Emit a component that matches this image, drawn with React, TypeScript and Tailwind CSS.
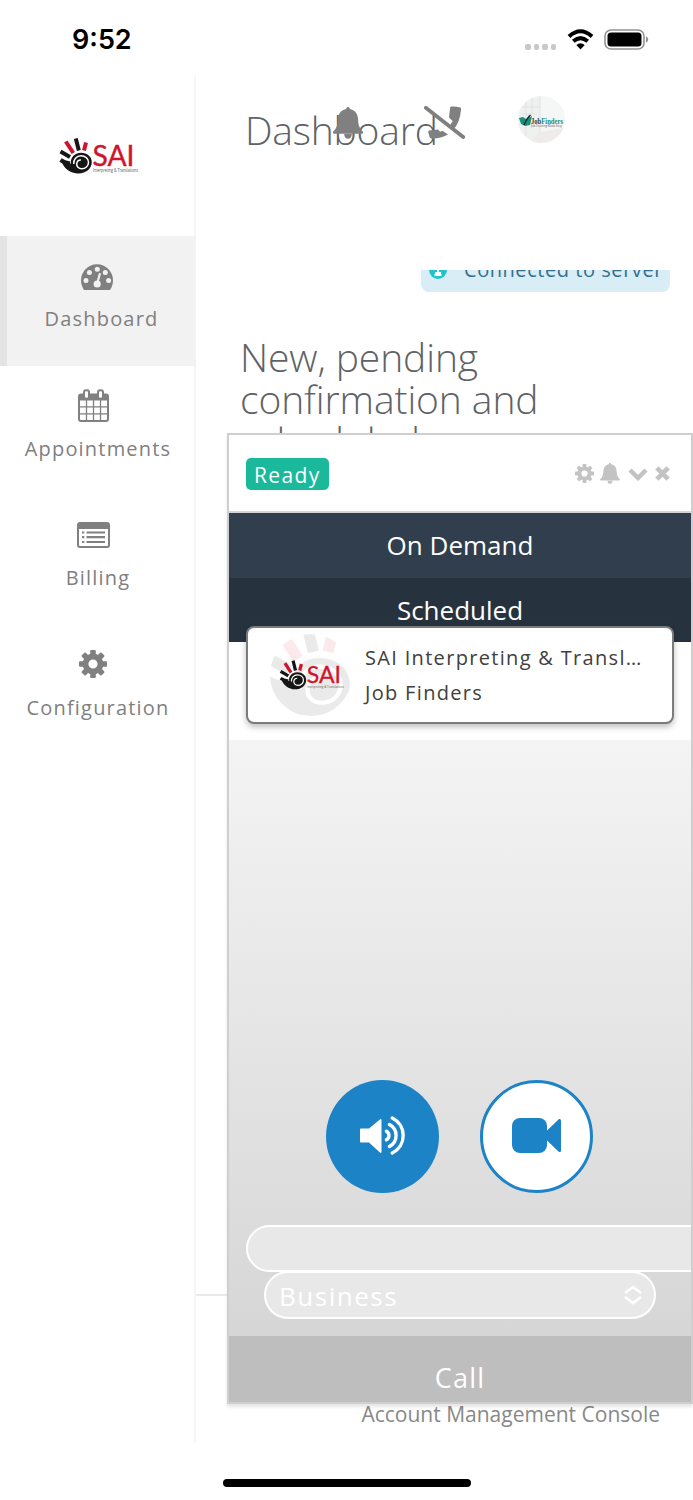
import type { ReactNode } from 'react';

type IconProps = { className?: string };

const BellIcon = ({ className }: IconProps) => (
  <svg viewBox="0 0 30 32" className={className} fill="currentColor">
    <path d="M15 0c1.2 0 1.8.8 1.8 2 5 1 7.7 4.4 8.2 9.500.3 5 .7 9.500 4.600 12.800.8.8.4 2.400-.6 2.400H1c-1 0-1.400-1.600-.6-2.400C4.300 21 4.700 16.500 5 11.500 5.500 6.400 8.200 3 13.200 2c0-1.200.6-2 1.800-2z" />
    <path d="M11.200 27h7.600c0 3-1.600 4.700-3.800 4.700s-3.800-1.700-3.800-4.700z" />
  </svg>
);

const GearIcon = ({ className }: IconProps) => (
  <svg viewBox="0 0 28 28" className={className}>
    <g fill="currentColor">
      <rect x="11.200" y="0" width="5.600" height="28" rx="1" />
      <rect x="11.200" y="0" width="5.600" height="28" rx="1" transform="rotate(45 14 14)" />
      <rect x="11.200" y="0" width="5.600" height="28" rx="1" transform="rotate(90 14 14)" />
      <rect x="11.200" y="0" width="5.600" height="28" rx="1" transform="rotate(135 14 14)" />
    </g>
    <circle cx="14" cy="14" r="7.500" fill="white" stroke="currentColor" strokeWidth="5.800" />
  </svg>
);

const GaugeIcon = ({ className }: IconProps) => (
  <svg viewBox="0 0 32 26" className={className}>
    <path d="M3 26C1 23 0 19.800 0 16.300a16 16 0 0 1 32 0c0 3.500-1 6.700-3 9.700z" fill="currentColor" />
    <g fill="#f2f2f2">
      <circle cx="5" cy="16.500" r="2.500" />
      <circle cx="8.400" cy="8.500" r="2.500" />
      <circle cx="16.300" cy="5.200" r="2.500" />
      <circle cx="24.300" cy="8.500" r="2.500" />
      <circle cx="27.600" cy="16.500" r="2.500" />
      <circle cx="16.200" cy="20" r="3.600" />
    </g>
    <path d="M16.300 19l2.500-9" stroke="#f2f2f2" strokeWidth="2.200" strokeLinecap="round" />
  </svg>
);

const CalendarIcon = ({ className }: IconProps) => (
  <svg viewBox="0 0 31 33" className={className} fill="none" stroke="currentColor">
    <rect x="1" y="5.500" width="29" height="26.500" rx="2" strokeWidth="2" />
    <path d="M1 5.500h29v6H1z" fill="currentColor" stroke="none" />
    <path d="M8.500 11v20M15.500 11v20M22.500 11v20M1 17.800h29M1 24.800h29" strokeWidth="1.300" />
    <rect x="6" y="1.200" width="5" height="8.500" rx="2" fill="white" strokeWidth="2" />
    <rect x="20" y="1.200" width="5" height="8.500" rx="2" fill="white" strokeWidth="2" />
  </svg>
);

const ListIcon = ({ className }: IconProps) => (
  <svg viewBox="0 0 33 26" className={className} stroke="currentColor">
    <rect x="1" y="1" width="31" height="24" rx="2" fill="none" strokeWidth="2" />
    <path d="M1 1h31v6H1z" fill="currentColor" stroke="none" />
    <path d="M5 10.500h2.300M5 15.200h2.300M5 20h2.300M9.500 10.500h18.500M9.500 15.200h18.500M9.500 20h18.500" strokeWidth="2.200" />
  </svg>
);

const PhoneSlashIcon = ({ className }: IconProps) => (
  <svg viewBox="0 0 41 33" className={className}>
    <path d="M27 .5q4.500-.5 9.300 1 1 .5.700 2.200Q36 16 29.500 23.500L25.500 20l3.200-5-3.700-3.500 1-9q.2-1.500 1-2z" fill="currentColor" />
    <path d="M5 24.500l9-1 2.200 2.200 2.300-1L24 28.500Q16 33 7 32.500q-1.200-.2-1.400-1.500L4.200 26q-.2-1.200.8-1.500z" fill="currentColor" />
    <path d="M1.800 1.800L39.200 31" stroke="currentColor" strokeWidth="3.800" strokeLinecap="round" />
  </svg>
);

const Hand = () => (
  <g fill="none">
    <g stroke="#161616" strokeWidth="4">
      <path d="M1.500 14.500L11 20" />
      <path d="M16.800 1.500L19.800 13.500" />
      <path d="M1.500 23Q5 25.500 11 26.500" />
    </g>
    <g stroke="#d0142c" strokeWidth="4">
      <path d="M6.800 4.500L14.300 16" />
      <path d="M27 5.500L25 13.500" />
    </g>
    <path
      d="M2 23.500C5 26 8.500 27 12 26.500c-1-5.500 3.500-10.800 10-10.800 6.200 0 10.800 4 10.800 9.300C32.800 31.500 27 36.500 19.500 36.500 11 36.500 5 31.500 2 23.500z"
      fill="#161616"
    />
    <path
      d="M14.800 27c-.5-4.500 2.700-8.200 7.200-8.200 4.200 0 7.500 2.700 7.500 6.500 0 3.900-3.200 6.400-6.700 6.400-3.300 0-5.300-2.200-5.100-4.900.2-2.400 2-4 4.200-3.800"
      stroke="white"
      strokeWidth="1.500"
    />
  </g>
);

const SaiLogo = ({ className }: IconProps) => (
  <svg viewBox="0 0 80 38" className={className}>
    <Hand />
    <text x="33.500" y="29" fontSize="29" textLength="42" lengthAdjust="spacingAndGlyphs" fill="#d0142c" stroke="#d0142c" strokeWidth=".4" className="font-['Lato']">SAI</text>
    <text x="34" y="34.500" fontSize="4.600" textLength="45" lengthAdjust="spacingAndGlyphs" fill="#555" className="font-['Open_Sans']">Interpreting &amp; Translations</text>
  </svg>
);

const CompanyAvatar = () => (
  <svg viewBox="0 0 82 82" className="h-[82px] w-[82px] shrink-0 rounded-full">
    <g opacity=".09" transform="translate(-12 -20) scale(2.800)">
      <Hand />
    </g>
    <svg x="9" y="25.500" width="66" height="31" viewBox="0 0 80 38">
      <SaiLogo />
    </svg>
  </svg>
);

const JobFindersAvatar = () => (
  <svg viewBox="0 0 47 47" className="h-[47px] w-[47px] rounded-full bg-[#f5f6f6]">
    <path d="M0 0h22v47H0z" fill="#eff0f0" />
    <path d="M8 0v40M14 0v18M22 0v47M0 11h22M4 18h15" stroke="#dfe2e2" strokeWidth=".9" />
    <path d="M22 36l25-4v15H12z" fill="#eeecea" />
    <path d="M1 22l4-1 3 2 6-3-2 9-5 1-4-2z" fill="#14907c" />
    <path d="M6 29q3-7 6.500-10" stroke="#1c2b2b" strokeWidth="1.500" fill="none" />
    <text x="13" y="27.500" fontSize="8.500" fontWeight="700" textLength="32" lengthAdjust="spacingAndGlyphs" className="font-['Liberation_Serif']">
      <tspan fill="#1f4848">Job</tspan><tspan fill="#14907c">Finders</tspan>
    </text>
    <text x="13" y="30.500" fontSize="2.800" textLength="31" fill="#555" className="font-['Open_Sans']">Job Training Made Easy</text>
  </svg>
);

const StatusBar = () => (
  <header className="flex h-[76px] shrink-0 items-start justify-between pl-[72px] pr-[44px] text-black">
    <span className="mt-[22px] font-['Inter'] text-[27px] font-semibold leading-[36px]">9:52</span>
    <div className="mt-[29px] flex">
      <div className="mt-[15px] flex gap-[3px]">
        {[0, 1, 2, 3].map((i) => (
          <span key={i} className="h-[6px] w-[5.500px] rounded-[2px] bg-[#c8c8c8]" />
        ))}
      </div>
      <svg viewBox="0 0 27 21" className="ml-[11px] h-[21px] w-[27px]">
        <path d="M2 7.500Q13.500-3 25 7.500M6.300 12.200q7.200-6.200 14.400 0" fill="none" stroke="black" strokeWidth="4" />
        <path d="M9.300 16q4.200-3.400 8.400 0l-4.200 4.500z" />
      </svg>
      <svg viewBox="0 0 45 21" className="ml-[10px] h-[21px] w-[45px]">
        <rect x="1" y="1" width="39" height="19" rx="6" fill="none" stroke="#929292" strokeWidth="1.600" />
        <rect x="3.500" y="3.500" width="34" height="14" rx="3.500" />
        <path d="M42 7.200q2.200 1 2.200 3.300T42 13.800z" fill="#929292" />
      </svg>
    </div>
  </header>
);

type NavItemProps = { label: string; icon: ReactNode; active?: boolean };

const NavItem = ({ label, icon, active }: NavItemProps) => (
  <li className={active ? 'h-[129.500px] border-l-[7px] border-[#e4e4e4] bg-[#f2f2f2]' : 'h-[129.500px]'}>
    <div className={active ? 'flex h-[69px] items-center justify-center pt-[13px] pr-[10px]' : 'flex h-[69px] items-center justify-center pt-[10px] pr-[10px]'}>{icon}</div>
    <div className="text-center text-[20px] font-medium leading-[27px] tracking-[1.200px]">{label}</div>
  </li>
);

const Sidebar = () => (
  <aside className="h-[1367px] w-[196px] shrink-0 border-r-2 border-[#f5f5f5] text-[#808080]">
    <div className="flex h-[160px] items-center justify-center pl-[3px]">
      <SaiLogo className="h-[38px] w-[80px]" />
    </div>
    <ul className="-mr-[2px]">
      <NavItem active label="Dashboard" icon={<GaugeIcon className="h-[26px] w-[32px]" />} />
      <NavItem label="Appointments" icon={<CalendarIcon className="h-[33px] w-[31px]" />} />
      <NavItem label="Billing" icon={<ListIcon className="h-[26px] w-[33px]" />} />
      <NavItem label="Configuration" icon={<GearIcon className="h-[28px] w-[28px]" />} />
    </ul>
  </aside>
);

const CallPanel = () => (
  <section className="absolute left-[227px] top-[433px] flex h-[971px] w-[466px] flex-col border-2 border-[#cfcfcf] bg-white shadow-[0_3px_3px_rgba(0,0,0,0.1)]">
    <div className="flex h-[78px] shrink-0 items-center justify-between border-b-2 border-[#d5d5d5] pl-[17px] pr-[21px]">
      <span className="mt-[2px] h-[32px] rounded-[5px] bg-[#1ab99b] px-[8px] text-[21px] font-medium leading-[34px] tracking-[1.400px] text-white">Ready</span>
      <div className="flex items-center text-[#c3c3c3]">
        <GearIcon className="h-[19px] w-[19px]" />
        <BellIcon className="ml-[6px] h-[21px] w-[20px]" />
        <svg viewBox="0 0 20 13" className="ml-[8px] mt-[3px] h-[13px] w-[20px]" fill="none" stroke="currentColor" strokeWidth="4.500">
          <path d="M2 2l8 8 8-8" />
        </svg>
        <svg viewBox="0 0 16 16" className="ml-[7px] mt-px h-[15px] w-[15px]" fill="none" stroke="currentColor" strokeWidth="5">
          <path d="M2 2l12 12M14 2L2 14" />
        </svg>
      </div>
    </div>
    <div className="h-[65px] shrink-0 bg-[#303e4e] text-center text-[26px] leading-[64px] text-white">On Demand</div>
    <div className="h-[64px] shrink-0 bg-[#26333e] text-center text-[26px] leading-[64px] text-white">Scheduled</div>
    <div className="h-[98px] shrink-0 px-[17px]">
      <div className="relative -top-[16px] flex h-[98px] items-center rounded-[8px] border-2 border-[#7b7b7b] bg-white pl-[22px] shadow-[0_3px_6px_rgba(0,0,0,0.25)]">
        <CompanyAvatar />
        <div className="ml-[13px] min-w-0 text-[20px] font-medium leading-[35.500px] tracking-[1.320px] text-[#404040]">
          <p className="whitespace-nowrap">SAI Interpreting &amp; Transl…</p>
          <p>Job Finders</p>
        </div>
      </div>
    </div>
    <div className="flex h-[596px] shrink-0 flex-col overflow-hidden bg-linear-to-b from-[#f4f4f4] to-[#d6d6d6] pt-[339.500px]">
      <div className="flex justify-center gap-[41px] pr-px">
        <button className="flex h-[113px] w-[113px] items-center justify-center rounded-full bg-[#1d83c7]">
          <svg viewBox="0 0 46 39" className="mb-[2px] h-[39px] w-[46px]" fill="none" stroke="white" strokeWidth="3.400" strokeLinecap="round">
            <path d="M1 12.500h8L20.500 3q1 0 1 1v32q0 1-1 1L9 26.500H1q-1 0-1-1v-12q0-1 1-1z" fill="white" stroke="none" />
            <path d="M26.500 15.200a5 5 0 0 1 0 8.600M29.500 8.500a12.500 12.500 0 0 1 0 22M32.300 2a19.500 19.500 0 0 1 0 35" />
          </svg>
        </button>
        <button className="flex h-[113px] w-[113px] items-center justify-center rounded-full border-[3px] border-[#1d83c7] bg-white">
          <svg viewBox="0 0 49 35" className="mb-[2px] h-[35px] w-[49px]" fill="#1d83c7">
            <rect width="35" height="35" rx="8" />
            <path d="M34 13.500L47 1q2-.5 2 1.500v30q0 2-2 1.500L34 21.500z" />
          </svg>
        </button>
      </div>
      <div className="ml-[17px] mt-[32.500px] h-[47px] w-[520px] shrink-0 rounded-full border-2 border-white bg-[#e8e8e8]" />
      <div className="-mt-px ml-[35px] flex h-[48px] w-[392px] shrink-0 items-center justify-between rounded-full border-2 border-white bg-[#e8e8e8] pl-[13px] pr-[12px] text-[26px] font-medium tracking-[1.500px] text-white">
        <span className="mt-[3px]">Business</span>
        <svg viewBox="0 0 18 20" className="h-[20px] w-[18px]" fill="none" stroke="white" strokeWidth="2.600">
          <path d="M1 8L9 2l8 6M1 12l8 6 8-6" />
        </svg>
      </div>
    </div>
    <div className="h-[66px] shrink-0 bg-[#bebebe] text-center text-[27px] leading-[84px] tracking-[1.200px] text-white">Call</div>
  </section>
);

export default function App() {
  return (
    <div className="relative flex h-[1500px] w-[693px] flex-col overflow-hidden bg-white font-['Open_Sans',sans-serif]">
      <StatusBar />
      <div className="flex">
        <Sidebar />
        <main className="min-w-0 flex-1 text-[#5f6366]">
          <div className="relative h-[194px] pl-[49px] pt-[29px]">
            <h1 className="text-[39px] font-light leading-[50px] -tracking-[0.200px]">Dashboard</h1>
            <BellIcon className="absolute left-[137px] top-[31px] h-[32px] w-[30px] text-[#808080]" />
            <PhoneSlashIcon className="absolute left-[228px] top-[30px] h-[33px] w-[41px] text-[#808080]" />
            <div className="absolute left-[322px] top-[20px]">
              <JobFindersAvatar />
            </div>
          </div>
          <div className="ml-[225px] flex h-[22px] w-[249px] items-end overflow-hidden rounded-b-[8px] bg-[#d9edf7] pl-[8px] text-[#31708f]">
            <svg viewBox="0 0 18 18" className="mb-[13px] h-[18px] w-[18px] shrink-0">
              <circle cx="9" cy="9" r="9" fill="#20c5c9" />
              <path d="M9 5v7M5.500 14h7M6 12h6" stroke="white" strokeWidth="2" />
            </svg>
            <span className="ml-[17px] mb-[9px] whitespace-nowrap text-[20px] leading-[27px] tracking-[0.550px]">Connected to server</span>
          </div>
          <h2 className="ml-[44px] mt-[44px] h-[958px] w-[340px] text-[39px] font-light leading-[42px] -tracking-[0.100px]">
            New, pending confirmation and scheduled
          </h2>
          <footer className="border-t-2 border-[#e7eaec] pr-[33px] pt-[104px] text-right text-[21px] leading-[28px] text-[#888]">
            Account Management Console
          </footer>
        </main>
      </div>
      <CallPanel />
      <div className="absolute bottom-[13px] left-[223px] h-[8px] w-[248px] rounded-full bg-black" />
    </div>
  );
}
